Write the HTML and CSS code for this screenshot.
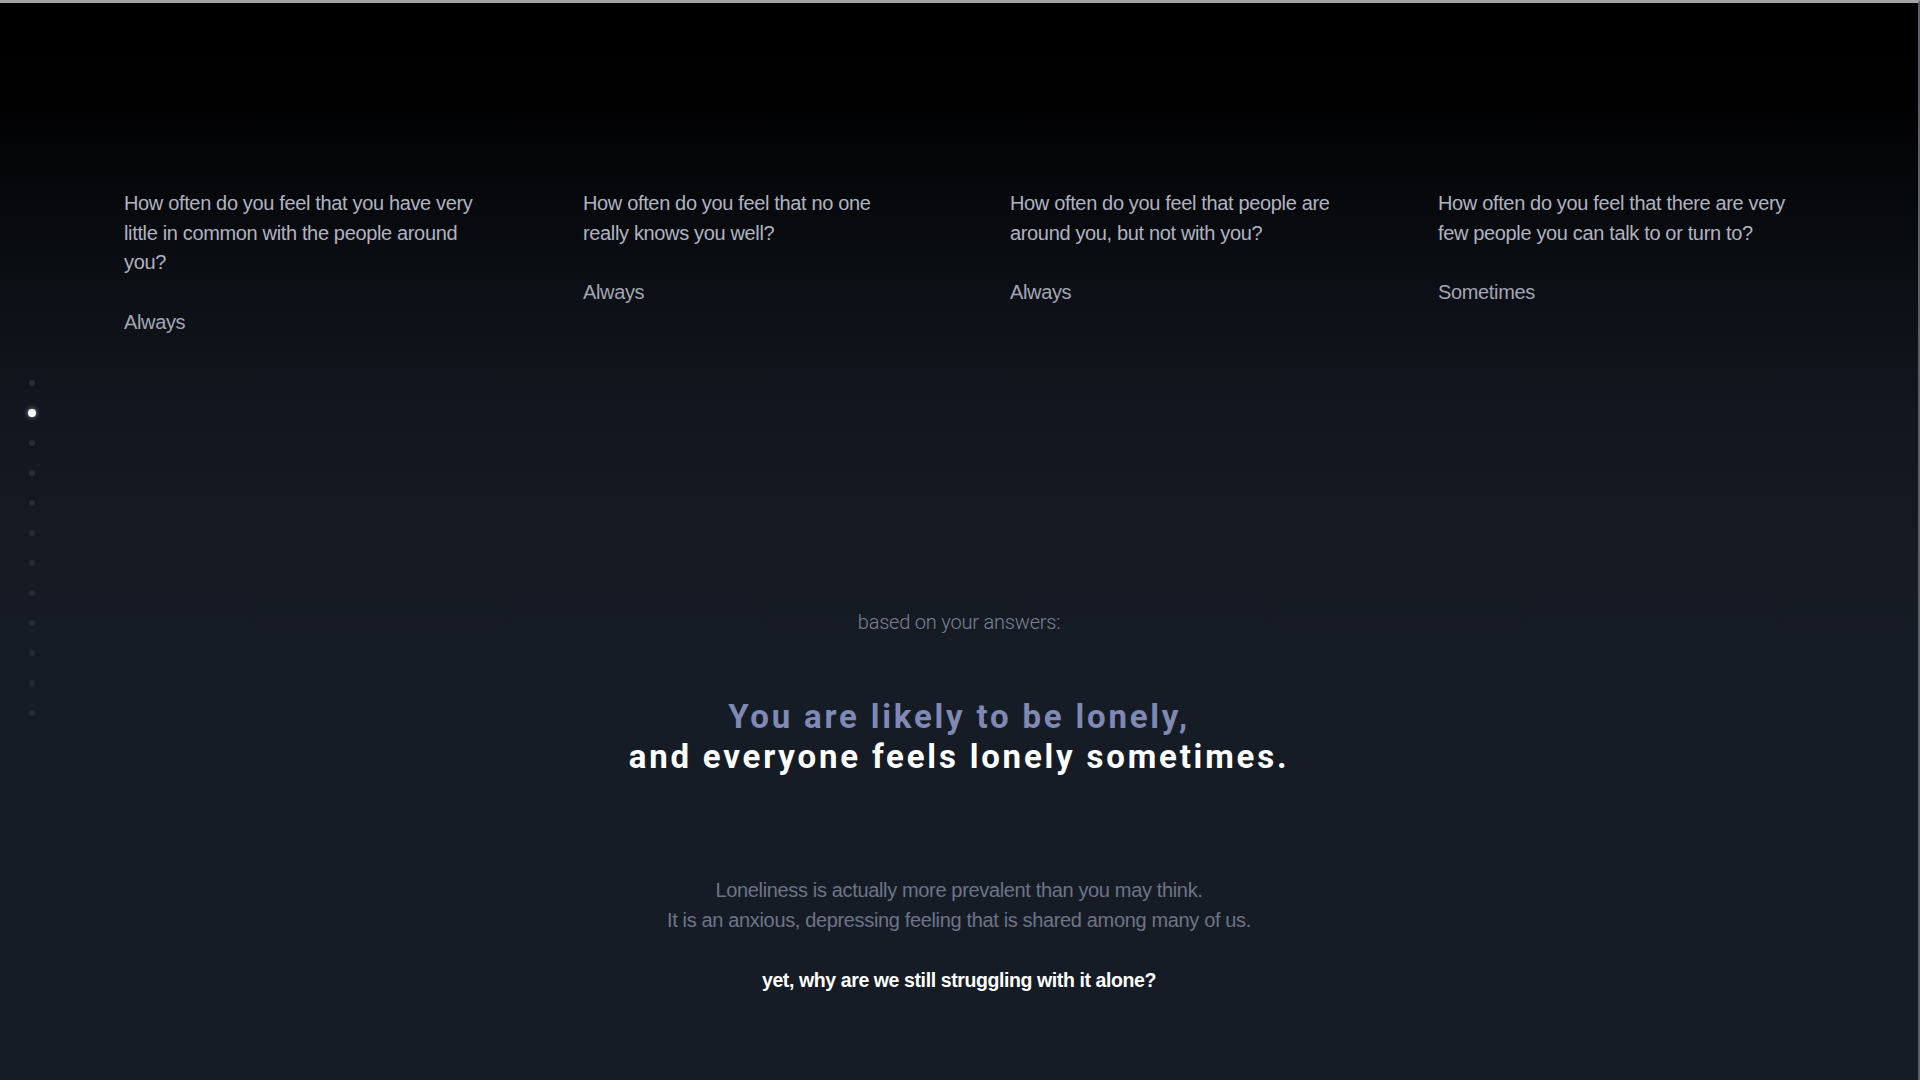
FILE: index.html
```html
<!DOCTYPE html>
<html lang="en">
<head>
<meta charset="utf-8">
<title>Loneliness results</title>
<link rel="stylesheet" href="styles.css">
</head>
<body>
<div class="page">
  <nav class="dots" aria-label="sections">
    <span class="dot"></span>
    <span class="dot dot--active"></span>
    <span class="dot"></span>
    <span class="dot"></span>
    <span class="dot"></span>
    <span class="dot"></span>
    <span class="dot"></span>
    <span class="dot"></span>
    <span class="dot"></span>
    <span class="dot"></span>
    <span class="dot"></span>
    <span class="dot"></span>
  </nav>

  <section class="answers">
    <div class="answer answer--one">
      <p class="question">How often do you feel that you have very little in common with the people around you?</p>
      <p class="reply">Always</p>
    </div>
    <div class="answer answer--two">
      <p class="question">How often do you feel that no one really knows you well?</p>
      <p class="reply">Always</p>
    </div>
    <div class="answer answer--three">
      <p class="question">How often do you feel that people are around you, but not with you?</p>
      <p class="reply">Always</p>
    </div>
    <div class="answer answer--four">
      <p class="question">How often do you feel that there are very few people you can talk to or turn to?</p>
      <p class="reply">Sometimes</p>
    </div>
  </section>

  <section class="result">
    <p class="result__lead">based on your answers:</p>
    <h1 class="result__title">
      <span class="result__accent">You are likely to be lonely,</span>
      <span class="result__main">and everyone feels lonely sometimes.</span>
    </h1>
    <p class="result__text">Loneliness is actually more prevalent than you may think.<br>It is an anxious, depressing feeling that is shared among many of us.</p>
    <p class="result__question">yet, why are we still struggling with it alone?</p>
  </section>
</div>
</body>
</html>
```

FILE: styles.css
```css
html, body {
  margin: 0;
  padding: 0;
  background: #161c25;
}

.page {
  position: relative;
  box-sizing: border-box;
  width: 1920px;
  height: 1080px;
  overflow: hidden;
  border-top: 3px solid #a3a3a3;
  border-right: 2px solid #5a6068;
  background: linear-gradient(to bottom,
    #000000 0px,
    #010102 100px,
    #06080b 190px,
    #0d1016 300px,
    #12161e 410px,
    #151a23 530px,
    #161c25 700px,
    #161c25 100%);
  font-family: "Liberation Sans", Arial, sans-serif;
}

/* side navigation dots */
.dots {
  position: absolute;
  left: 29px;
  top: 377px;
  display: flex;
  flex-direction: column;
  gap: 24px;
}

.dot {
  display: block;
  width: 6px;
  height: 6px;
  border-radius: 50%;
  background: #262c36;
}

.dot--active {
  width: 8px;
  height: 8px;
  margin-left: -1px;
  margin-top: -1px;
  margin-bottom: -1px;
  background: #ffffff;
  box-shadow: 0 0 5px rgba(255, 255, 255, 0.6);
}

/* answers row */
.answers {
  display: grid;
  grid-template-columns: 459px 427px 428px 1fr;
  padding: 186px 0 0 124px;
}

.answer p {
  margin: 0;
}

.question {
  font-size: 20px;
  line-height: 29.5px;
  color: #b0b3c1;
  letter-spacing: -0.35px;
}

.answer--one .question { max-width: 372px; }
.answer--two .question { max-width: 318px; }
.answer--three .question { max-width: 345px; }
.answer--four .question { max-width: 368px; }

.reply {
  margin-top: 30px !important;
  font-size: 20px;
  line-height: 29.5px;
  color: #a2a6b4;
  letter-spacing: -0.35px;
}

/* result */
.result {
  display: flex;
  flex-direction: column;
  align-items: center;
  text-align: center;
  margin-top: 273px;
}

.result__lead {
  margin: 0;
  font-family: Roboto, "Liberation Sans", sans-serif;
  font-weight: 300;
  font-size: 20px;
  line-height: 24px;
  color: #7c8194;
  letter-spacing: -0.2px;
}

.result__title {
  margin: 63px 0 0;
  font-family: Roboto, "Liberation Sans", sans-serif;
  font-weight: 700;
  font-size: 33px;
  line-height: 40px;
  letter-spacing: 2.8px;
  display: flex;
  flex-direction: column;
  align-items: center;
}

.result__accent {
  color: #7f89b3;
}

.result__main {
  color: #ffffff;
}

.result__text {
  margin: 99px 0 0;
  font-size: 20px;
  line-height: 29.5px;
  color: #6e7487;
  letter-spacing: -0.35px;
}

.result__question {
  margin: 31px 0 0;
  font-size: 19.5px;
  line-height: 29px;
  font-weight: 700;
  color: #ffffff;
  letter-spacing: -0.4px;
}
```
